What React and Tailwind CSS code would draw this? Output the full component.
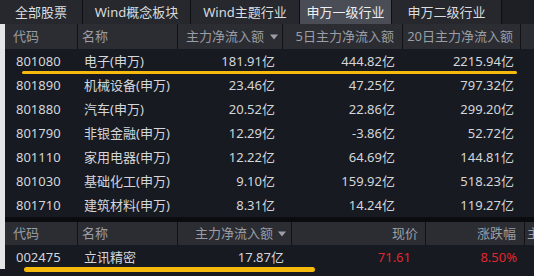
import React from "react";

const top = [
  ["801080", "电子(申万)", "181.91亿", "444.82亿", "2215.94亿"],
  ["801890", "机械设备(申万)", "23.46亿", "47.25亿", "797.32亿"],
  ["801880", "汽车(申万)", "20.52亿", "22.86亿", "299.20亿"],
  ["801790", "非银金融(申万)", "12.29亿", "-3.86亿", "52.72亿"],
  ["801110", "家用电器(申万)", "12.22亿", "64.69亿", "144.81亿"],
  ["801030", "基础化工(申万)", "9.10亿", "159.92亿", "518.23亿"],
  ["801710", "建筑材料(申万)", "8.31亿", "14.24亿", "119.27亿"],
];

const tabs = [
  ["全部股票", "w-[83px]", false],
  ["Wind概念板块", "w-[108px]", false],
  ["Wind主题行业", "w-[109px]", false],
  ["申万一级行业", "w-[92px]", true],
  ["申万二级行业", "w-[110px]", false],
];

function Arrow() {
  return (
    <svg width="8" height="6" viewBox="0 0 8 6" className="shrink-0">
      <path d="M0 0.5 L8 0.5 L4 5.5 Z" fill="#9a9ea6" />
    </svg>
  );
}

export default function App() {
  return (
    <div className="relative w-[534px] h-[276px] overflow-hidden bg-[#171a21] font-['Noto_Sans','Noto_Sans_CJK_SC',sans-serif] text-[13px] leading-none">
      {/* tabs */}
      <div className="flex h-[24px] bg-[#1d1f24]">
        {tabs.map(([t, w, on]) => (
          <div
            key={t}
            className={`${w} h-full flex items-center justify-center border-r border-[#0e0f12] ${
              on ? "bg-[#4a4d55] text-[#eceef2]" : "bg-[#26282d] text-[#dadcdf]"
            }`}
          >
            {t}
          </div>
        ))}
        <div className="flex-1" />
      </div>

      <div className="border-l-[5px] border-[#e4e5e7]">
        {/* top header */}
        <div className="grid grid-cols-[73px_100px_105px_120px_118px_13px] h-[25px] bg-[#2b2d32] text-[#9a9ea6]">
          <div className="flex items-center pl-[8px] border-r border-[#111216]">代码</div>
          <div className="flex items-center pl-[4px] border-r border-[#111216]">名称</div>
          <div className="flex items-center justify-end gap-[6px] pr-[4px] border-r border-[#111216]">
            <span>主力净流入额</span>
            <Arrow />
          </div>
          <div className="flex items-center justify-end pr-[8px] border-r border-[#111216]">5日主力净流入额</div>
          <div className="flex items-center justify-end pr-[7px] border-r border-[#111216]">20日主力净流入额</div>
          <div />
        </div>

        {/* top rows */}
        {top.map((r) => (
          <div
            key={r[0]}
            className="grid grid-cols-[73px_100px_105px_120px_118px_13px] h-[24px] items-center text-[#d4d6da]"
          >
            <div className="pl-[11px]">{r[0]}</div>
            <div className="pl-[6px] whitespace-nowrap">{r[1]}</div>
            <div className="text-right pr-[8px]">{r[2]}</div>
            <div className="text-right pr-[8px]">{r[3]}</div>
            <div className="text-right pr-[7px]">{r[4]}</div>
            <div />
          </div>
        ))}

        <div className="h-[5px] bg-[#0b0c0f]" />

        {/* bottom header */}
        <div className="grid grid-cols-[73px_100px_114px_134px_99px_9px] h-[23px] bg-[#2b2d32] text-[#9a9ea6]">
          <div className="flex items-center pl-[8px] border-r border-[#111216]">代码</div>
          <div className="flex items-center pl-[4px] border-r border-[#111216]">名称</div>
          <div className="flex items-center justify-end gap-[5px] pr-[5px] border-r border-[#111216]">
            <span>主力净流入额</span>
            <Arrow />
          </div>
          <div className="flex items-center justify-end pr-[7px] border-r border-[#111216]">现价</div>
          <div className="flex items-center justify-end pr-[8px] border-r border-[#111216]">涨跌幅</div>
          <div className="flex items-center pl-[2px] overflow-hidden whitespace-nowrap">主</div>
        </div>

        {/* bottom row */}
        <div className="grid grid-cols-[73px_100px_114px_134px_99px_9px] h-[24px] items-center text-[#d4d6da]">
          <div className="pl-[11px]">002475</div>
          <div className="pl-[6px]">立讯精密</div>
          <div className="text-right pr-[8px]">17.87亿</div>
          <div className="text-right pr-[15px] text-[#e2262f]">71.61</div>
          <div className="text-right pr-[8px] text-[#e2262f]">8.50%</div>
          <div />
        </div>
      </div>

      {/* highlight underlines */}
      <div className="absolute left-[22px] top-[71px] w-[495px] h-[3px] bg-[#f5ba0b] rounded-full" />
      <div className="absolute left-[24px] top-[267px] w-[291px] h-[5px] bg-[#f5ba0b] rounded-full" />
    </div>
  );
}
